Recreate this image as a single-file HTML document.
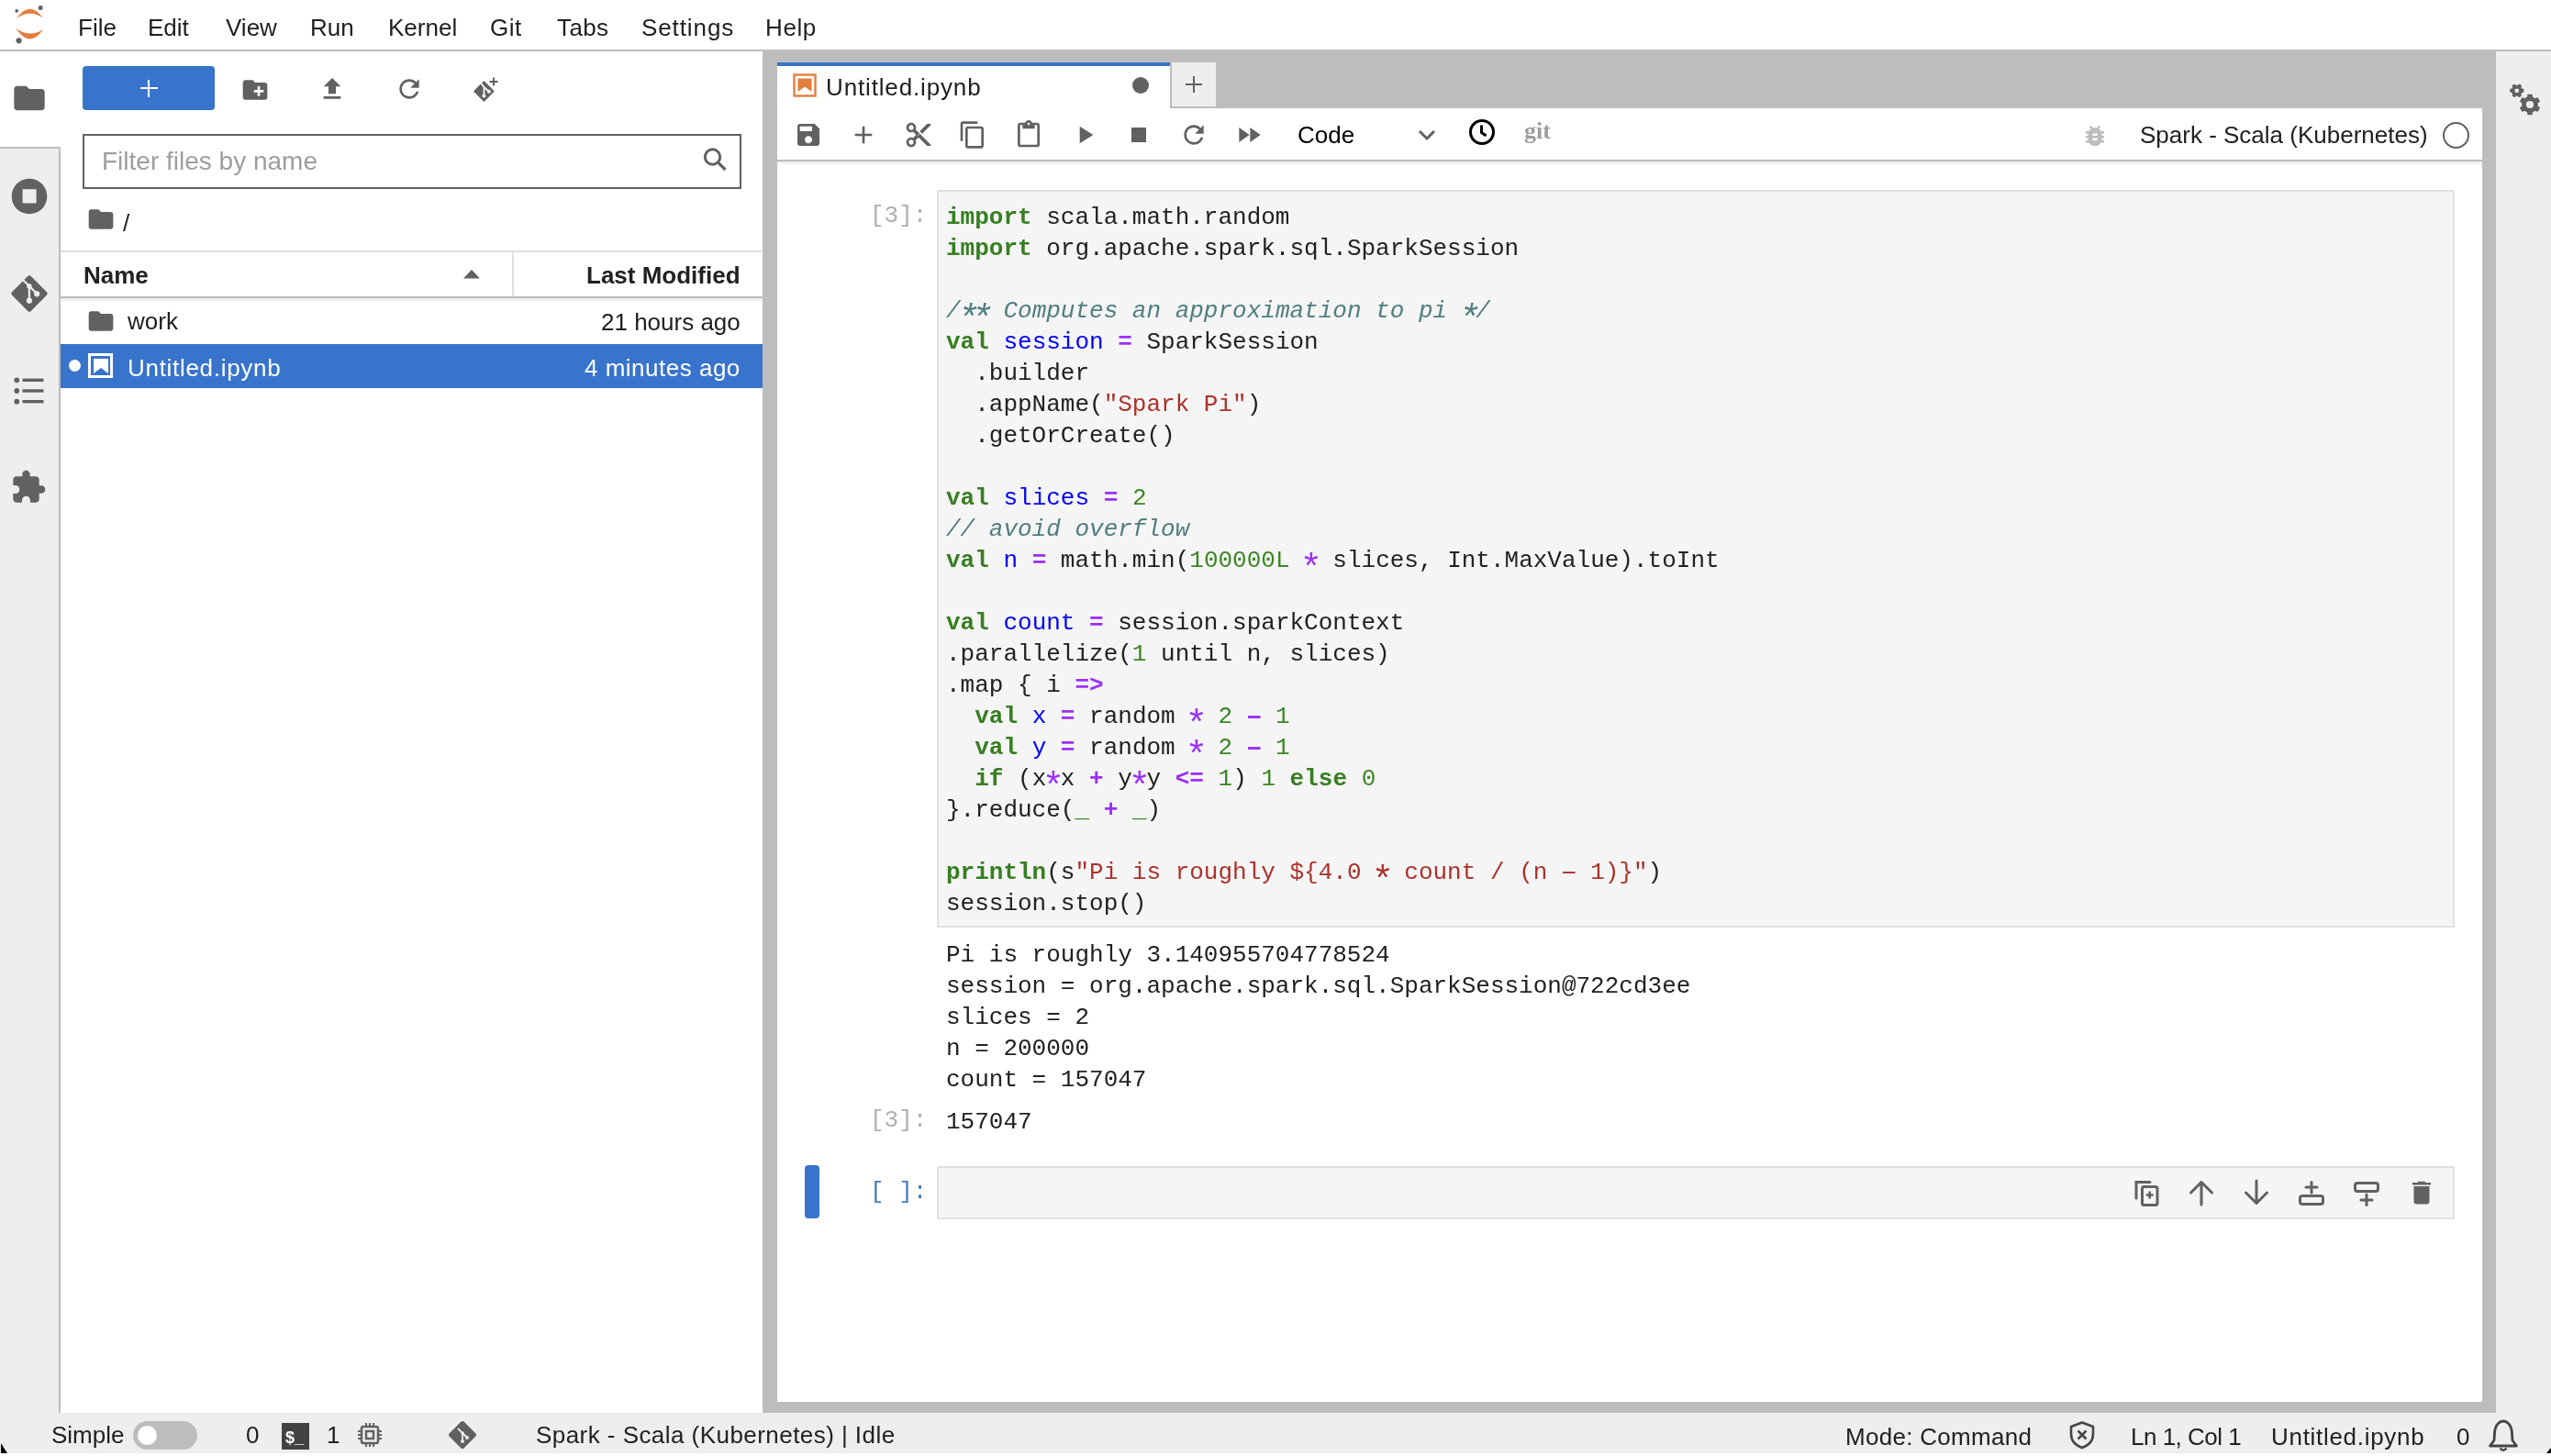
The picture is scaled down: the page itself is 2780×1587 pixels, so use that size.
<!DOCTYPE html><html><head><meta charset="utf-8"><title>JupyterLab</title><style>
html,body{margin:0;padding:0;width:2780px;height:1587px;overflow:hidden;background:#fff;}
.t{position:absolute;white-space:pre;will-change:transform;}
.a{font-weight:normal;display:inline-block;transform-origin:50% 9.6px;transform:translateY(6.2px) scale(1.55);}
.m{font-weight:normal;display:inline-block;transform-origin:50% 17px;transform:scale(1.9,1.4);}
.m2{display:inline-block;transform-origin:50% 17px;transform:scale(1.9,0.9);}
</style></head><body>
<div style="position:absolute;left:0px;top:0px;width:2780px;height:54px;background:#ffffff;"></div>
<div style="position:absolute;left:0px;top:54px;width:2780px;height:2px;background:#bdbdbd;"></div>
<svg style="position:absolute;left:10px;top:2px;" width="44" height="50" viewBox="10 2 44 50"><path fill="#e37e3d" d="M18,20.2 Q32.5,-0.5 47,19.8 Q32.5,9.5 18,20.2Z"/><path fill="#e37e3d" d="M17.5,31 Q32.5,53.5 47,32 Q32.5,41.5 17.5,31Z"/><circle cx="44.2" cy="8.4" r="2.5" fill="#616161"/><circle cx="18.2" cy="11.8" r="1.9" fill="#616161"/><circle cx="20.6" cy="44.3" r="3.1" fill="#616161"/></svg>
<div class="t" style="left:85px;top:17px;font-size:26px;line-height:26px;color:#212121;font-weight:normal;font-family:'Liberation Sans', sans-serif;letter-spacing:0px;">File</div>
<div class="t" style="left:161px;top:17px;font-size:26px;line-height:26px;color:#212121;font-weight:normal;font-family:'Liberation Sans', sans-serif;letter-spacing:0px;">Edit</div>
<div class="t" style="left:246px;top:17px;font-size:26px;line-height:26px;color:#212121;font-weight:normal;font-family:'Liberation Sans', sans-serif;letter-spacing:0px;">View</div>
<div class="t" style="left:338px;top:17px;font-size:26px;line-height:26px;color:#212121;font-weight:normal;font-family:'Liberation Sans', sans-serif;letter-spacing:0px;">Run</div>
<div class="t" style="left:423px;top:17px;font-size:26px;line-height:26px;color:#212121;font-weight:normal;font-family:'Liberation Sans', sans-serif;letter-spacing:0px;">Kernel</div>
<div class="t" style="left:534px;top:17px;font-size:26px;line-height:26px;color:#212121;font-weight:normal;font-family:'Liberation Sans', sans-serif;letter-spacing:0.5px;">Git</div>
<div class="t" style="left:607px;top:17px;font-size:26px;line-height:26px;color:#212121;font-weight:normal;font-family:'Liberation Sans', sans-serif;letter-spacing:0.4px;">Tabs</div>
<div class="t" style="left:699px;top:17px;font-size:26px;line-height:26px;color:#212121;font-weight:normal;font-family:'Liberation Sans', sans-serif;letter-spacing:0.9px;">Settings</div>
<div class="t" style="left:834px;top:17px;font-size:26px;line-height:26px;color:#212121;font-weight:normal;font-family:'Liberation Sans', sans-serif;letter-spacing:0.6px;">Help</div>
<div style="position:absolute;left:0px;top:56px;width:64px;height:104px;background:#ffffff;"></div>
<div style="position:absolute;left:0px;top:160px;width:64px;height:1380px;background:#eeeeee;"></div>
<div style="position:absolute;left:0px;top:160px;width:66px;height:2px;background:#bdbdbd;"></div>
<div style="position:absolute;left:64px;top:160px;width:2px;height:1380px;background:#bdbdbd;"></div>
<svg style="position:absolute;left:12px;top:87px;" width="40" height="40" viewBox="0 0 24 24"><path fill="#616161" d="M10 4H4c-1.1 0-1.99.9-1.99 2L2 18c0 1.1.9 2 2 2h16c1.1 0 2-.9 2-2V8c0-1.1-.9-2-2-2h-8l-2-2z"/></svg>
<svg style="position:absolute;left:12px;top:194px;" width="40" height="40" viewBox="0 0 40 40"><circle cx="20" cy="20" r="19.3" fill="#616161"/><rect x="12.6" y="12.2" width="15" height="15.2" rx="0.6" fill="#eeeeee"/></svg>
<svg style="position:absolute;left:11px;top:299px;" width="42" height="42" viewBox="0 0 42 42"><g transform="translate(21,21) rotate(45)"><rect x="-14.6" y="-14.6" width="29.2" height="29.2" rx="2.5" fill="#616161"/></g><path d="M13.8,6 L20.9,12.7 L20.9,28.7 M20.9,12.7 L29.2,21.3" stroke="#eeeeee" stroke-width="2.3" fill="none"/><circle cx="20.9" cy="28.7" r="3.1" fill="#eeeeee"/><circle cx="29.2" cy="21.3" r="3.1" fill="#eeeeee"/><circle cx="20.9" cy="12.9" r="2.7" fill="#eeeeee"/></svg>
<svg style="position:absolute;left:14px;top:410px;" width="36" height="32" viewBox="0 0 36 32"><circle cx="4.3" cy="4.3" r="2.9" fill="#616161"/><circle cx="4.3" cy="16" r="2.9" fill="#616161"/><circle cx="4.3" cy="27.7" r="2.9" fill="#616161"/><rect x="10.5" y="2.6" width="23" height="3.4" fill="#616161"/><rect x="10.5" y="14.3" width="23" height="3.4" fill="#616161"/><rect x="10.5" y="26" width="23" height="3.4" fill="#616161"/></svg>
<svg style="position:absolute;left:11px;top:511px;" width="40" height="40" viewBox="0 0 24 24"><path fill="#616161" d="M20.5 11H19V7c0-1.1-.9-2-2-2h-4V3.5C13 2.12 11.88 1 10.5 1S8 2.12 8 3.5V5H4c-1.1 0-1.99.9-1.99 2v3.8H3.5c1.49 0 2.7 1.21 2.7 2.7s-1.21 2.7-2.7 2.7H2V20c0 1.1.9 2 2 2h3.8v-1.5c0-1.49 1.21-2.7 2.7-2.7 1.49 0 2.7 1.21 2.7 2.7V22H17c1.1 0 2-.9 2-2v-4h1.5c1.38 0 2.5-1.12 2.5-2.5S21.88 11 20.5 11z"/></svg>
<div style="position:absolute;left:66px;top:56px;width:765px;height:1484px;background:#ffffff;"></div>
<div style="position:absolute;left:90px;top:72px;width:144px;height:48px;background:#3874cb;border-radius:4px;"></div>
<div style="position:absolute;left:161px;top:87px;width:2px;height:19px;background:#ffffff;"></div>
<div style="position:absolute;left:153px;top:95px;width:19px;height:2px;background:#ffffff;"></div>
<svg style="position:absolute;left:262px;top:82px;" width="32" height="32" viewBox="0 0 24 24"><path fill="#616161" d="M20 6h-8l-2-2H4c-1.11 0-1.99.89-1.99 2L2 18c0 1.11.89 2 2 2h16c1.11 0 2-.89 2-2V8c0-1.11-.89-2-2-2zm-1 8h-3v3h-2v-3h-3v-2h3V9h2v3h3v2z"/></svg>
<svg style="position:absolute;left:346px;top:81px;" width="32" height="32" viewBox="0 0 24 24"><path fill="#616161" d="M9 16h6v-6h4l-7-7-7 7h4zm-4 2h14v2H5z"/></svg>
<svg style="position:absolute;left:430px;top:81px;" width="32" height="32" viewBox="0 0 24 24"><path fill="#616161" d="M17.65 6.35C16.2 4.9 14.21 4 12 4c-4.42 0-7.99 3.58-7.99 8s3.57 8 7.99 8c3.73 0 6.84-2.55 7.73-6h-2.08c-.82 2.33-3.04 4-5.65 4-3.31 0-6-2.69-6-6s2.69-6 6-6c1.66 0 3.14.69 4.22 1.78L13 11h7V4l-2.35 2.35z"/></svg>
<svg style="position:absolute;left:512px;top:82px;" width="34" height="32" viewBox="0 0 34 32"><g transform="translate(15.4,17.5) rotate(45)"><rect x="-8.2" y="-8.2" width="16.4" height="16.4" rx="1.2" fill="#616161"/></g><path d="M11.5,7.5 L15.6,13.2 L15.4,22 M15.6,13.2 L20.8,17.7" stroke="#fff" stroke-width="1.7" fill="none"/><circle cx="15.4" cy="22.6" r="2" fill="#fff"/><circle cx="20.8" cy="17.7" r="2" fill="#fff"/><path d="M26,2.4 v9.2 M21.4,7 h9.2" stroke="#616161" stroke-width="1.9" fill="none"/></svg>
<div style="position:absolute;left:90px;top:146px;width:714px;height:56px;border:2px solid #616161;background:#fff;"></div>
<div class="t" style="left:111px;top:162px;font-size:28px;line-height:28px;color:#9e9e9e;font-weight:normal;font-family:'Liberation Sans', sans-serif;">Filter files by name</div>
<svg style="position:absolute;left:762px;top:158px;" width="34" height="34" viewBox="0 0 34 34"><circle cx="14.5" cy="13" r="8.2" stroke="#616161" stroke-width="3" fill="none"/><path d="M20.3,18.8 L28.5,27" stroke="#616161" stroke-width="3.2"/></svg>
<svg style="position:absolute;left:94px;top:223px;" width="32" height="32" viewBox="0 0 24 24"><path fill="#616161" d="M10 4H4c-1.1 0-1.99.9-1.99 2L2 18c0 1.1.9 2 2 2h16c1.1 0 2-.9 2-2V8c0-1.1-.9-2-2-2h-8l-2-2z"/></svg>
<div class="t" style="left:134px;top:230px;font-size:26px;line-height:26px;color:#212121;font-weight:normal;font-family:'Liberation Sans', sans-serif;">/</div>
<div style="position:absolute;left:66px;top:273px;width:765px;height:2px;background:#e0e0e0;"></div>
<div class="t" style="left:91px;top:287px;font-size:26px;line-height:26px;color:#212121;font-weight:bold;font-family:'Liberation Sans', sans-serif;">Name</div>
<svg style="position:absolute;left:504px;top:293px;" width="20" height="11" viewBox="0 0 20 11"><path d="M1,10.5 L10,1 L19,10.5Z" fill="#616161"/></svg>
<div style="position:absolute;left:558px;top:275px;width:2px;height:48px;background:#e0e0e0;"></div>
<div class="t" style="right:1973px;top:287px;font-size:26px;line-height:26px;color:#212121;font-weight:bold;font-family:'Liberation Sans', sans-serif;text-align:right;">Last Modified</div>
<div style="position:absolute;left:66px;top:323px;width:765px;height:2px;background:#bdbdbd;"></div>
<div style="position:absolute;left:66px;top:325px;width:765px;height:5px;background:linear-gradient(rgba(0,0,0,0.09),rgba(0,0,0,0));"></div>
<svg style="position:absolute;left:94px;top:334px;" width="32" height="32" viewBox="0 0 24 24"><path fill="#616161" d="M10 4H4c-1.1 0-1.99.9-1.99 2L2 18c0 1.1.9 2 2 2h16c1.1 0 2-.9 2-2V8c0-1.1-.9-2-2-2h-8l-2-2z"/></svg>
<div class="t" style="left:139px;top:337px;font-size:26px;line-height:26px;color:#212121;font-weight:normal;font-family:'Liberation Sans', sans-serif;">work</div>
<div class="t" style="right:1973px;top:338px;font-size:26px;line-height:26px;color:#212121;font-weight:normal;font-family:'Liberation Sans', sans-serif;text-align:right;">21 hours ago</div>
<div style="position:absolute;left:66px;top:375px;width:765px;height:48px;background:#3874cb;"></div>
<div style="position:absolute;left:75px;top:392px;width:13px;height:13px;border-radius:50%;background:#fff;"></div>
<svg style="position:absolute;left:96px;top:385px;" width="28" height="28" viewBox="0 0 28 28"><rect x="1.5" y="1.5" width="24" height="24" stroke="#fff" stroke-width="3" fill="none"/><path d="M6,6 H22 V22 L14,16 L6,22Z" fill="#fff"/></svg>
<div class="t" style="left:139px;top:388px;font-size:26px;line-height:26px;color:#ffffff;font-weight:normal;font-family:'Liberation Sans', sans-serif;letter-spacing:0.7px;">Untitled.ipynb</div>
<div class="t" style="right:1973px;top:388px;font-size:26px;line-height:26px;color:#ffffff;font-weight:normal;font-family:'Liberation Sans', sans-serif;text-align:right;letter-spacing:0.5px;">4 minutes ago</div>
<div style="position:absolute;left:831px;top:56px;width:1889px;height:1484px;background:#bdbdbd;"></div>
<div style="position:absolute;left:847px;top:118px;width:1858px;height:1410px;background:#ffffff;"></div>
<div style="position:absolute;left:847px;top:68px;width:428px;height:51px;background:#ffffff;"></div>
<div style="position:absolute;left:847px;top:68px;width:428px;height:4px;background:#3874cb;"></div>
<svg style="position:absolute;left:864px;top:80px;" width="26" height="26" viewBox="0 0 26 26"><rect x="1.5" y="1.5" width="23" height="23" stroke="#e37e3d" stroke-width="2.4" fill="none"/><path d="M5.5,5.5 H20.5 V20 L13,14.5 L5.5,20Z" fill="#e37e3d"/></svg>
<div class="t" style="left:900px;top:82px;font-size:26px;line-height:26px;color:#212121;font-weight:normal;font-family:'Liberation Sans', sans-serif;letter-spacing:0.85px;">Untitled.ipynb</div>
<div style="position:absolute;left:1234px;top:84px;width:18px;height:18px;border-radius:50%;background:#616161;"></div>
<div style="position:absolute;left:1275px;top:68px;width:50px;height:48px;background:#eeeeee;"></div>
<div style="position:absolute;left:1275px;top:68px;width:2px;height:50px;background:#bdbdbd;"></div>
<div style="position:absolute;left:1275px;top:116px;width:50px;height:2px;background:#bdbdbd;"></div>
<div style="position:absolute;left:1300px;top:83px;width:2px;height:18px;background:#616161;"></div>
<div style="position:absolute;left:1292px;top:91px;width:18px;height:2px;background:#616161;"></div>
<div style="position:absolute;left:847px;top:174px;width:1858px;height:2px;background:#bdbdbd;"></div>
<div style="position:absolute;left:847px;top:176px;width:1858px;height:5px;background:linear-gradient(rgba(0,0,0,0.08),rgba(0,0,0,0));"></div>
<svg style="position:absolute;left:865px;top:131px;" width="32" height="32" viewBox="0 0 24 24"><path fill="#616161" d="M17 3H5c-1.11 0-2 .9-2 2v14c0 1.1.89 2 2 2h14c1.1 0 2-.9 2-2V7l-4-4zm-5 16c-1.66 0-3-1.34-3-3s1.34-3 3-3 3 1.34 3 3-1.34 3-3 3zm3-10H5V5h10v4z"/></svg>
<svg style="position:absolute;left:925px;top:131px;" width="32" height="32" viewBox="0 0 24 24"><path fill="#616161" d="M19 13h-6v6h-2v-6H5v-2h6V5h2v6h6v2z"/></svg>
<svg style="position:absolute;left:985px;top:131px;" width="32" height="32" viewBox="0 0 24 24"><path fill="#616161" d="M9.64 7.64c.23-.5.36-1.05.36-1.64 0-2.21-1.79-4-4-4S2 3.79 2 6s1.79 4 4 4c.59 0 1.14-.13 1.64-.36L10 12l-2.36 2.36C7.14 14.13 6.59 14 6 14c-2.21 0-4 1.79-4 4s1.79 4 4 4 4-1.79 4-4c0-.59-.13-1.14-.36-1.64L12 14l7 7h3v-1L9.64 7.64zM6 8c-1.1 0-2-.89-2-2s.9-2 2-2 2 .89 2 2-.9 2-2 2zm0 12c-1.1 0-2-.89-2-2s.9-2 2-2 2 .89 2 2-.9 2-2 2zm6-7.5c-.28 0-.5-.22-.5-.5s.22-.5.5-.5.5.22.5.5-.22.5-.5.5zM19 3l-6 6 2 2 7-7V3z"/></svg>
<svg style="position:absolute;left:1044px;top:131px;" width="32" height="32" viewBox="0 0 24 24"><path fill="#616161" d="M16 1H4c-1.1 0-2 .9-2 2v14h2V3h12V1zm3 4H8c-1.1 0-2 .9-2 2v14c0 1.1.9 2 2 2h11c1.1 0 2-.9 2-2V7c0-1.1-.9-2-2-2zm0 16H8V7h11v14z"/></svg>
<svg style="position:absolute;left:1105px;top:131px;" width="32" height="32" viewBox="0 0 24 24"><path fill="#616161" d="M19 2h-4.18C14.4.84 13.3 0 12 0c-1.3 0-2.4.84-2.82 2H5c-1.1 0-2 .9-2 2v16c0 1.1.9 2 2 2h14c1.1 0 2-.9 2-2V4c0-1.1-.9-2-2-2zm-7 0c.55 0 1 .45 1 1s-.45 1-1 1-1-.45-1-1 .45-1 1-1zm7 18H5V4h2v3h10V4h2v16z"/></svg>
<svg style="position:absolute;left:1166px;top:131px;" width="32" height="32" viewBox="0 0 24 24"><path fill="#616161" d="M8 5v14l11-7z"/></svg>
<svg style="position:absolute;left:1225px;top:131px;" width="32" height="32" viewBox="0 0 24 24"><path fill="#616161" d="M6 6h12v12H6z"/></svg>
<svg style="position:absolute;left:1285px;top:131px;" width="32" height="32" viewBox="0 0 24 24"><path fill="#616161" d="M17.65 6.35C16.2 4.9 14.21 4 12 4c-4.42 0-7.99 3.58-7.99 8s3.57 8 7.99 8c3.73 0 6.84-2.55 7.73-6h-2.08c-.82 2.33-3.04 4-5.65 4-3.31 0-6-2.69-6-6s2.69-6 6-6c1.66 0 3.14.69 4.22 1.78L13 11h7V4l-2.35 2.35z"/></svg>
<svg style="position:absolute;left:1345px;top:131px;" width="32" height="32" viewBox="0 0 24 24"><path fill="#616161" d="M4 18l8.5-6L4 6v12zm9-12v12l8.5-6L13 6z"/></svg>
<div class="t" style="left:1414px;top:134px;font-size:26px;line-height:26px;color:#000000;font-weight:normal;font-family:'Liberation Sans', sans-serif;">Code</div>
<svg style="position:absolute;left:1543px;top:138px;" width="24" height="20" viewBox="0 0 24 20"><path d="M4,5 L12,13 L20,5" stroke="#616161" stroke-width="3" fill="none"/></svg>
<svg style="position:absolute;left:1600px;top:129px;" width="30" height="30" viewBox="0 0 30 30"><circle cx="15" cy="15" r="12.5" stroke="#000" stroke-width="3" fill="none"/><path d="M14.5,7.5 V15.5 L19.5,19" stroke="#000" stroke-width="3" fill="none"/></svg>
<div class="t" style="left:1661px;top:130px;font-size:26px;line-height:26px;color:#9e9e9e;font-weight:bold;font-family:'Liberation Serif', serif;">git</div>
<svg style="position:absolute;left:2268px;top:133px;" width="30" height="30" viewBox="0 0 24 24"><path fill="#bdbdbd" d="M20 8h-2.81c-.45-.78-1.07-1.45-1.82-1.96L17 4.41 15.59 3l-2.17 2.17C12.96 5.06 12.49 5 12 5c-.49 0-.96.06-1.41.17L8.41 3 7 4.41l1.62 1.63C7.88 6.55 7.26 7.22 6.81 8H4v2h2.09c-.05.33-.09.66-.09 1v1H4v2h2v1c0 .34.04.67.09 1H4v2h2.81c1.04 1.79 2.97 3 5.19 3s4.15-1.21 5.19-3H20v-2h-2.09c.05-.33.09-.66.09-1v-1h2v-2h-2v-1c0-.34-.04-.67-.09-1H20V8zm-6 8h-4v-2h4v2zm0-4h-4v-2h4v2z"/></svg>
<div class="t" style="left:2332px;top:134px;font-size:26px;line-height:26px;color:#212121;font-weight:normal;font-family:'Liberation Sans', sans-serif;">Spark - Scala (Kubernetes)</div>
<div style="position:absolute;left:2662px;top:133px;width:25px;height:25px;border-radius:50%;border:2.5px solid #616161;"></div>
<div style="position:absolute;left:1021px;top:207px;width:1650px;height:800px;background:#f5f5f5;border:2px solid #e0e0e0;"></div>
<div class="t" style="left:1031px;top:220px;font-family:'Liberation Mono', monospace;font-size:26px;line-height:34px;color:#212121;"><span style="color:#377e22;font-weight:bold;">import</span> scala.math.random
<span style="color:#377e22;font-weight:bold;">import</span> org.apache.spark.sql.SparkSession

<span style="color:#507e7f;font-style:italic;">/<span class="a">*</span><span class="a">*</span> Computes an approximation to pi <span class="a">*</span>/</span>
<span style="color:#377e22;font-weight:bold;">val</span> <span style="color:#0000f5;">session</span> <span style="color:#9c2ff6;font-weight:bold;">=</span> SparkSession
  .builder
  .appName(<span style="color:#ab312a;">&quot;Spark Pi&quot;</span>)
  .getOrCreate()

<span style="color:#377e22;font-weight:bold;">val</span> <span style="color:#0000f5;">slices</span> <span style="color:#9c2ff6;font-weight:bold;">=</span> <span style="color:#3b8624;">2</span>
<span style="color:#507e7f;font-style:italic;">// avoid overflow</span>
<span style="color:#377e22;font-weight:bold;">val</span> <span style="color:#0000f5;">n</span> <span style="color:#9c2ff6;font-weight:bold;">=</span> math.min(<span style="color:#3b8624;">100000L</span> <span style="color:#9c2ff6;font-weight:bold;"><span class="a">*</span></span> slices, Int.MaxValue).toInt

<span style="color:#377e22;font-weight:bold;">val</span> <span style="color:#0000f5;">count</span> <span style="color:#9c2ff6;font-weight:bold;">=</span> session.sparkContext
.parallelize(<span style="color:#3b8624;">1</span> until n, slices)
.map { i <span style="color:#9c2ff6;font-weight:bold;">=&gt;</span>
  <span style="color:#377e22;font-weight:bold;">val</span> <span style="color:#0000f5;">x</span> <span style="color:#9c2ff6;font-weight:bold;">=</span> random <span style="color:#9c2ff6;font-weight:bold;"><span class="a">*</span></span> <span style="color:#3b8624;">2</span> <span style="color:#9c2ff6;font-weight:bold;"><span class="m">-</span></span> <span style="color:#3b8624;">1</span>
  <span style="color:#377e22;font-weight:bold;">val</span> <span style="color:#0000f5;">y</span> <span style="color:#9c2ff6;font-weight:bold;">=</span> random <span style="color:#9c2ff6;font-weight:bold;"><span class="a">*</span></span> <span style="color:#3b8624;">2</span> <span style="color:#9c2ff6;font-weight:bold;"><span class="m">-</span></span> <span style="color:#3b8624;">1</span>
  <span style="color:#377e22;font-weight:bold;">if</span> (x<span style="color:#9c2ff6;font-weight:bold;"><span class="a">*</span></span>x <span style="color:#9c2ff6;font-weight:bold;">+</span> y<span style="color:#9c2ff6;font-weight:bold;"><span class="a">*</span></span>y <span style="color:#9c2ff6;font-weight:bold;">&lt;=</span> <span style="color:#3b8624;">1</span>) <span style="color:#3b8624;">1</span> <span style="color:#377e22;font-weight:bold;">else</span> <span style="color:#3b8624;">0</span>
}.reduce(<span style="color:#3b8624;">_</span> <span style="color:#9c2ff6;font-weight:bold;">+</span> <span style="color:#3b8624;">_</span>)

<span style="color:#377e22;font-weight:bold;">println</span>(s<span style="color:#ab312a;">&quot;Pi is roughly ${4.0 <span class="a">*</span> count / (n <span class="m2">-</span> 1)}&quot;</span>)
session.stop()</div>
<div class="t" style="right:1770px;top:222px;font-size:26px;line-height:26px;color:#b0b0b0;font-weight:normal;font-family:'Liberation Mono', monospace;text-align:right;">[3]:</div>
<div class="t" style="left:1031px;top:1024px;font-family:'Liberation Mono', monospace;font-size:26px;line-height:34px;color:#212121;">Pi is roughly 3.140955704778524
session = org.apache.spark.sql.SparkSession@722cd3ee
slices = 2
n = 200000
count = 157047</div>
<div class="t" style="right:1770px;top:1208px;font-size:26px;line-height:26px;color:#b0b0b0;font-weight:normal;font-family:'Liberation Mono', monospace;text-align:right;">[3]:</div>
<div class="t" style="left:1031px;top:1210px;font-size:26px;line-height:26px;color:#212121;font-weight:normal;font-family:'Liberation Mono', monospace;">157047</div>
<div style="position:absolute;left:877px;top:1270px;width:16px;height:58px;background:#3874cb;border-radius:4px;"></div>
<div style="position:absolute;left:1021px;top:1271px;width:1650px;height:54px;background:#f5f5f5;border:2px solid #e0e0e0;"></div>
<div class="t" style="right:1770px;top:1286px;font-size:26px;line-height:26px;color:#467dbc;font-weight:normal;font-family:'Liberation Mono', monospace;text-align:right;">[ ]:</div>
<svg style="position:absolute;left:2324px;top:1284px;" width="30" height="32" viewBox="0 0 30 32"><path d="M4,22 V4.5 H19" stroke="#616161" stroke-width="3" fill="none" stroke-linecap="round"/><rect x="10.5" y="9.5" width="16.5" height="20" rx="2" stroke="#616161" stroke-width="3" fill="none"/><path d="M18.7,14.5 V22.5 M14.7,18.5 H22.7" stroke="#616161" stroke-width="2.6"/></svg>
<svg style="position:absolute;left:2384px;top:1284px;" width="30" height="32" viewBox="0 0 30 32"><path d="M15,29 V5 M3.5,16 L15,4.5 L26.5,16" stroke="#616161" stroke-width="3" fill="none" stroke-linecap="round" stroke-linejoin="round"/></svg>
<svg style="position:absolute;left:2444px;top:1284px;" width="30" height="32" viewBox="0 0 30 32"><path d="M15,3 V27 M3.5,16 L15,27.5 L26.5,16" stroke="#616161" stroke-width="3" fill="none" stroke-linecap="round" stroke-linejoin="round"/></svg>
<svg style="position:absolute;left:2503px;top:1284px;" width="32" height="32" viewBox="0 0 32 32"><rect x="3.5" y="19.5" width="25" height="9" rx="2.5" stroke="#616161" stroke-width="3" fill="none"/><path d="M16,4.5 V16 M10,10 H22" stroke="#616161" stroke-width="3" stroke-linecap="round"/></svg>
<svg style="position:absolute;left:2563px;top:1284px;" width="32" height="32" viewBox="0 0 32 32"><rect x="3.5" y="5.5" width="25" height="9" rx="2.5" stroke="#616161" stroke-width="3" fill="none"/><path d="M16,18 V29.5 M10,24 H22" stroke="#616161" stroke-width="3" stroke-linecap="round"/></svg>
<svg style="position:absolute;left:2626px;top:1284px;" width="26" height="32" viewBox="0 0 26 32"><path d="M3,5 H23 V7.5 H3Z M9,3.8 H17 V5 H9Z" fill="#616161"/><path d="M4.5,9 H21.5 V25.5 Q21.5,28.5 18.5,28.5 H7.5 Q4.5,28.5 4.5,25.5Z" fill="#616161"/></svg>
<div style="position:absolute;left:2720px;top:56px;width:60px;height:1484px;background:#eeeeee;"></div>
<svg style="position:absolute;left:2720px;top:80px;" width="60" height="60" viewBox="2720 80 60 60"><g transform="translate(2757,114)" fill="#616161"><rect x="-2.8" y="-11.3" width="5.6" height="22.6" rx="0.8" transform="rotate(0)"/><rect x="-2.8" y="-11.3" width="5.6" height="22.6" rx="0.8" transform="rotate(60)"/><rect x="-2.8" y="-11.3" width="5.6" height="22.6" rx="0.8" transform="rotate(120)"/><circle r="8.9"/><circle r="4.1" fill="#eeeeee"/></g><g transform="translate(2742.8,98.8)" fill="#616161"><rect x="-1.95" y="-7.6" width="3.9" height="15.2" rx="0.8" transform="rotate(30)"/><rect x="-1.95" y="-7.6" width="3.9" height="15.2" rx="0.8" transform="rotate(90)"/><rect x="-1.95" y="-7.6" width="3.9" height="15.2" rx="0.8" transform="rotate(150)"/><circle r="6.0"/><circle r="2.4" fill="#eeeeee"/></g></svg>
<div style="position:absolute;left:0px;top:1540px;width:2780px;height:47px;background:#eeeeee;"></div>
<div class="t" style="left:56px;top:1551px;font-size:26px;line-height:26px;color:#212121;font-weight:normal;font-family:'Liberation Sans', sans-serif;">Simple</div>
<div style="position:absolute;left:145px;top:1549px;width:70px;height:31px;border-radius:16px;background:#bdbdbd;"></div>
<div style="position:absolute;left:150px;top:1554px;width:21px;height:21px;border-radius:50%;background:#fff;"></div>
<div class="t" style="left:268px;top:1551px;font-size:26px;line-height:26px;color:#212121;font-weight:normal;font-family:'Liberation Sans', sans-serif;">0</div>
<div style="position:absolute;left:307px;top:1551px;width:30px;height:29px;background:#424242;"></div>
<div class="t" style="left:311px;top:1558px;font-size:18px;line-height:18px;color:#ffffff;font-weight:bold;font-family:'Liberation Sans', sans-serif;">$_</div>
<div class="t" style="left:356px;top:1551px;font-size:26px;line-height:26px;color:#212121;font-weight:normal;font-family:'Liberation Sans', sans-serif;">1</div>
<svg style="position:absolute;left:388px;top:1549px;" width="30" height="30" viewBox="0 0 30 30"><rect x="6" y="6" width="18" height="18" rx="2" stroke="#616161" stroke-width="2.5" fill="none"/><rect x="11" y="11" width="8" height="8" stroke="#616161" stroke-width="2.5" fill="none"/><rect x="10" y="2" width="2" height="4" fill="#616161"/><rect x="10" y="24" width="2" height="4" fill="#616161"/><rect x="2" y="10" width="4" height="2" fill="#616161"/><rect x="24" y="10" width="4" height="2" fill="#616161"/><rect x="14" y="2" width="2" height="4" fill="#616161"/><rect x="14" y="24" width="2" height="4" fill="#616161"/><rect x="2" y="14" width="4" height="2" fill="#616161"/><rect x="24" y="14" width="4" height="2" fill="#616161"/><rect x="18" y="2" width="2" height="4" fill="#616161"/><rect x="18" y="24" width="2" height="4" fill="#616161"/><rect x="2" y="18" width="4" height="2" fill="#616161"/><rect x="24" y="18" width="4" height="2" fill="#616161"/></svg>
<svg style="position:absolute;left:487px;top:1547px;" width="34" height="34" viewBox="0 0 34 34"><g transform="translate(17,17) rotate(45)"><rect x="-11.3" y="-11.3" width="22.6" height="22.6" rx="2.5" fill="#616161"/></g><path d="M12,10 L17,15 L17,24 M17,15 L22,20" stroke="#eee" stroke-width="1.8" fill="none"/><circle cx="17" cy="24" r="2" fill="#eee"/><circle cx="22" cy="20" r="2" fill="#eee"/><circle cx="17" cy="15" r="1.8" fill="#eee"/></svg>
<div class="t" style="left:584px;top:1551px;font-size:26px;line-height:26px;color:#212121;font-weight:normal;font-family:'Liberation Sans', sans-serif;letter-spacing:0.45px;">Spark - Scala (Kubernetes) | Idle</div>
<div class="t" style="left:2011px;top:1553px;font-size:26px;line-height:26px;color:#212121;font-weight:normal;font-family:'Liberation Sans', sans-serif;letter-spacing:0.3px;">Mode: Command</div>
<svg style="position:absolute;left:2252px;top:1547px;" width="34" height="34" viewBox="0 0 34 34"><path d="M17,3.5 L29,8 V16 C29,23.5 24,28.5 17,31 C10,28.5 5,23.5 5,16 V8Z" stroke="#464646" stroke-width="2.6" fill="none" stroke-linejoin="round"/><path d="M12.5,12.5 L21.5,21.5 M21.5,12.5 L12.5,21.5" stroke="#464646" stroke-width="2.6"/></svg>
<div class="t" style="left:2322px;top:1553px;font-size:26px;line-height:26px;color:#212121;font-weight:normal;font-family:'Liberation Sans', sans-serif;letter-spacing:-0.5px;">Ln 1, Col 1</div>
<div class="t" style="left:2475px;top:1553px;font-size:26px;line-height:26px;color:#212121;font-weight:normal;font-family:'Liberation Sans', sans-serif;letter-spacing:0.7px;">Untitled.ipynb</div>
<div class="t" style="left:2677px;top:1553px;font-size:26px;line-height:26px;color:#212121;font-weight:normal;font-family:'Liberation Sans', sans-serif;">0</div>
<svg style="position:absolute;left:2709px;top:1545px;" width="38" height="40" viewBox="0 0 38 40"><path d="M4.5,31 H33.5 L29,25 C28.5,20 28.8,15 27.5,11.5 C26,7 22.5,4 19,4 C15.5,4 12,7 10.5,11.5 C9.2,15 9.5,20 9,25Z" stroke="#464646" stroke-width="2.8" fill="none" stroke-linejoin="round"/><path d="M15.5,33.5 Q19,38 22.5,33.5" stroke="#464646" stroke-width="2.6" fill="none"/></svg>
<div style="position:absolute;left:0px;top:1584px;width:2780px;height:3px;background:#ffffff;"></div>
<svg style="position:absolute;left:0px;top:1572px;" width="10" height="12" viewBox="0 0 10 12"><path d="M1,1 L8,12 H1Z" fill="#000"/></svg>
<svg style="position:absolute;left:2774px;top:1578px;" width="6" height="6" viewBox="0 0 6 6"><path d="M6,0 V6 H1Z" fill="#000"/></svg>
</body></html>
